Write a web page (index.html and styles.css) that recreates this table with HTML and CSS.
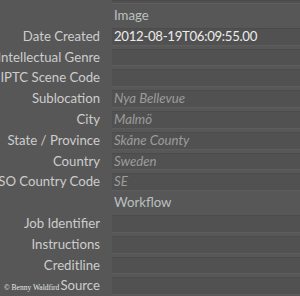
FILE: index.html
```html
<!DOCTYPE html>
<html>
<head>
<meta charset="utf-8">
<link rel="stylesheet" href="styles.css">
</head>
<body>
<div class="panel">
  <div class="row partial"><div class="label"></div><div class="field"></div></div>
  <div class="row header"><div class="label"></div><div class="section">Image</div></div>
  <div class="row"><div class="label">Date Created</div><div class="field value">2012-08-19T06:09:55.00</div></div>
  <div class="row"><div class="label">Intellectual Genre</div><div class="field"></div></div>
  <div class="row"><div class="label">IPTC Scene Code</div><div class="field"></div></div>
  <div class="row"><div class="label">Sublocation</div><div class="field auto">Nya Bellevue</div></div>
  <div class="row"><div class="label">City</div><div class="field auto">Malmö</div></div>
  <div class="row"><div class="label">State / Province</div><div class="field auto">Skåne County</div></div>
  <div class="row"><div class="label">Country</div><div class="field auto">Sweden</div></div>
  <div class="row"><div class="label">ISO Country Code</div><div class="field auto">SE</div></div>
  <div class="row header"><div class="label"></div><div class="section">Workflow</div></div>
  <div class="row"><div class="label">Job Identifier</div><div class="field"></div></div>
  <div class="row"><div class="label">Instructions</div><div class="field"></div></div>
  <div class="row"><div class="label">Creditline</div><div class="field"></div></div>
  <div class="row"><div class="label">Source</div><div class="field"></div></div>
</div>
<div class="credit">© Benny Waldfird</div>
</body>
</html>
```
FILE: styles.css
```css
html, body {
  margin: 0;
  padding: 0;
  width: 300px;
  height: 296px;
  overflow: hidden;
  background: #575757;
}
body {
  position: relative;
  font-family: Lato, "Noto Sans", sans-serif;
  font-size: 13.2px;
}
.panel {
  display: flex;
  flex-direction: column;
  gap: 3px;
}
.row {
  display: grid;
  grid-template-columns: 112px 1fr;
  height: 17.8px;
  align-items: stretch;
}
.row.partial {
  height: 4px;
}
.label {
  color: #cdcdcd;
  text-align: right;
  padding-right: 12px;
  white-space: nowrap;
  overflow: hidden;
  direction: rtl;
  line-height: 17.8px;
}
.field {
  background: #515151;
  border-top: 1px solid #4b4b4b;
  border-bottom: 1px solid #5d5d5d;
  box-sizing: border-box;
  padding-left: 2px;
  line-height: 15.8px;
  white-space: nowrap;
}
.value {
  color: #ececec;
  letter-spacing: -0.3px;
}
.auto {
  color: #9c9c9c;
  font-style: italic;
}
.section {
  color: #bcc0c0;
  padding-left: 2px;
  line-height: 17.8px;
}
.credit {
  position: absolute;
  left: 4px;
  bottom: 4px;
  font-family: "Liberation Serif", serif;
  font-size: 7.5px;
  color: #e6e6e6;
}
```
